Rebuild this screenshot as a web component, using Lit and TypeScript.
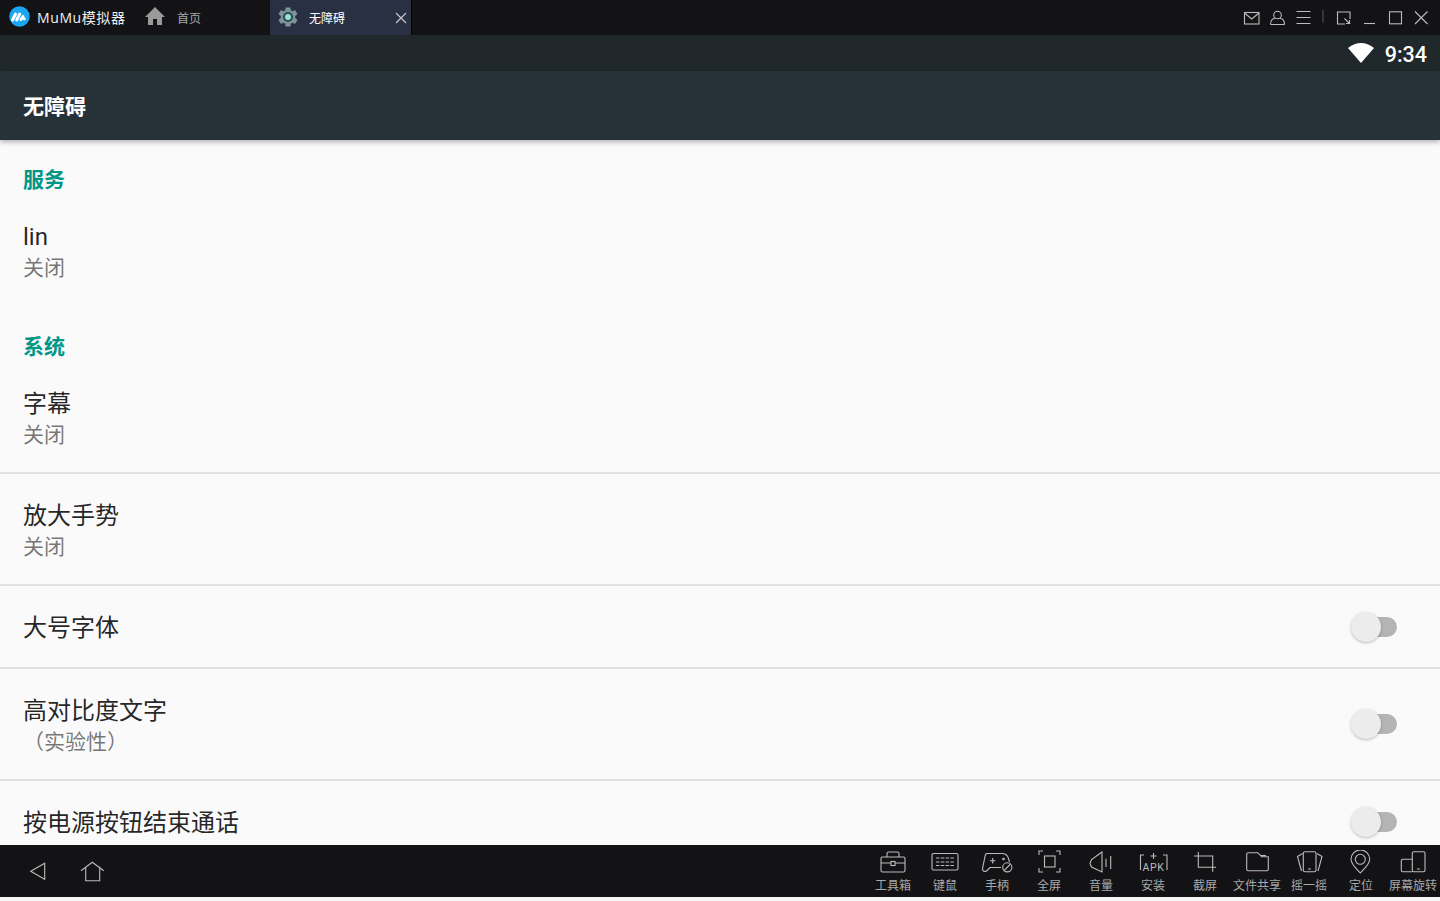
import { LitElement, html, css, svg } from "lit";
import { customElement } from "lit/decorators.js";

const tools = [
  { label: "工具箱", icon: svg`<rect x="4" y="7" width="24" height="15" rx="1.5"/><path d="M10 7V3.500q0-1.500 1.500-1.500h9q1.500 0 1.500 1.500V7M4 13h10M18 13h10"/><rect x="14" y="11.500" width="4" height="4"/>` },
  { label: "键鼠", icon: svg`<rect x="3" y="3.500" width="26" height="16.500" rx="1.500"/><path d="M7 8h18M7 12h18M7 15.500h18" stroke-dasharray="3.500 1.300"/>` },
  { label: "手柄", icon: svg`<path d="M6 3.500h15c3 0 5.500 1.500 6.500 5l1 3.500M20 17.500H9l-3.500 3.500q-1.500 1-3 0Q1 20 1.600 18L4 6.500q.5-3 2-3"/><path d="M9 10.700h5.400M11.700 8v5.400"/><circle cx="22.500" cy="9" r=".8"/><circle cx="26.300" cy="17.300" r="4.600"/><path d="M23 20.600l6.600-6.600"/>` },
  { label: "全屏", icon: svg`<path d="M10 1H6v4M23 1h4v4M6 18v4h4M27 18v4h-4"/><rect x="11.500" y="6" width="10.500" height="11"/>` },
  { label: "音量", icon: svg`<path d="M17 2L6.500 9.500 5 13.500l1.500 3.500L17 22z"/><path d="M21 8.700V17M25.700 6v13"/>` },
  { label: "安装", icon: svg`<path d="M7 5H3.500v15M26 5h4v15M16.500 3v6M13.500 6h6"/><text x="16.500" y="21" text-anchor="middle" class="apk">APK</text>` },
  { label: "截屏", icon: svg`<path d="M9.300 2v15.300H27M5 6h18.700v15.700"/>` },
  { label: "文件共享", icon: svg`<path d="M5.700 4.200q0-1.500 1.500-1.500h9.500l4 4h6.600v12.500q0 1.500-1.500 1.500H7.200q-1.500 0-1.500-1.500z"/><path d="M20 5.500h5"/>` },
  { label: "摇一摇", icon: svg`<rect x="10.300" y="1.700" width="12.700" height="20" rx="1.800"/><path d="M15 19h3M9.500 3.500L4.500 6.500 8.500 21M24 3.500l5 3-4 14.500"/>` },
  { label: "定位", icon: svg`<path d="M15.300 23C11 18 6 14.500 6 9.300a9.300 9.300 0 0 1 18.700 0c0 5.200-5 8.700-9.400 13.700z"/><circle cx="15.300" cy="9.300" r="5"/>` },
  { label: "屏幕旋转", icon: svg`<rect x="15.300" y="1.700" width="12.700" height="20" rx="1.500"/><path d="M20 19h3M15.300 9.300H5.800q-1.500 0-1.500 1.500v9.400q0 1.500 1.500 1.500h9.500"/>` },
];

const gear =
  "M19.14 12.94c.04-.3.06-.61.06-.94 0-.32-.02-.64-.07-.94l2.03-1.58c.18-.14.23-.41.12-.61l-1.92-3.32c-.12-.22-.37-.29-.59-.22l-2.39.96c-.5-.38-1.03-.7-1.62-.94l-.36-2.54c-.04-.24-.24-.41-.48-.41h-3.84c-.24 0-.43.17-.47.41l-.36 2.54c-.59.24-1.13.57-1.62.94l-2.39-.96c-.22-.08-.47 0-.59.22L2.74 8.87c-.12.21-.08.47.12.61l2.03 1.58c-.05.3-.09.63-.09.94s.02.64.07.94l-2.03 1.58c-.18.14-.23.41-.12.61l1.92 3.32c.12.22.37.29.59.22l2.39-.96c.5.38 1.03.7 1.62.94l.36 2.54c.05.24.24.41.48.41h3.84c.24 0 .44-.17.47-.41l.36-2.54c.59-.24 1.13-.56 1.62-.94l2.39.96c.22.08.47 0 .59-.22l1.92-3.32c.12-.22.07-.47-.12-.61l-2.01-1.58z";

@customElement("app-root")
export class AppRoot extends LitElement {
  static styles = css`
    :host {
      display: flex;
      flex-direction: column;
      width: 1440px;
      height: 901px;
      overflow: hidden;
      background: #f6f6f6;
      font-family: Roboto, "Noto Sans CJK SC", sans-serif;
    }
    svg { display: block; flex: none; }
    .line { fill: none; stroke: #bcbcbc; stroke-width: 1.1; }

    .titlebar {
      height: 35px;
      flex: none;
      display: flex;
      align-items: stretch;
      background: #131316;
    }
    .logo { margin: 6px 0 0 9px; }
    .brand {
      margin-left: 7px;
      width: 92px;
      font: 14px/35px "Open Sans", "Noto Sans CJK SC", sans-serif;
      letter-spacing: 0.6px;
      color: #f0f0f0;
      white-space: nowrap;
    }
    .home-icon { margin: 4px 0 0 14px; }
    .home-label {
      margin-left: 10px;
      width: 93px;
      font: 12px/35px "Noto Sans CJK SC", sans-serif;
      color: #a8a8a8;
    }
    .tab {
      width: 141px;
      display: flex;
      align-items: center;
      background: #2a3044;
      border-right: 1px solid #000;
    }
    .tab-gear { margin-left: 6px; margin-top: -1px; }
    .tab-label {
      margin-left: 9px;
      font: 12px/35px "Noto Sans CJK SC", sans-serif;
      color: #fff;
    }
    .tab-close { margin-left: auto; margin-right: 3px; stroke: #c8c8c8; }
    .winctl { margin-left: auto; }

    .status {
      height: 36px;
      flex: none;
      display: flex;
      align-items: center;
      justify-content: flex-end;
      background: #21282c;
    }
    .wifi { margin-right: 11px; margin-top: -1px; }
    .time {
      margin-right: 13px;
      margin-top: 3px;
      font: 500 21.500px/33px Roboto, sans-serif;
      color: #fff;
    }

    .appbar {
      height: 69px;
      flex: none;
      position: relative;
      z-index: 1;
      display: flex;
      align-items: center;
      padding-left: 23px;
      background: #263238;
      box-shadow: 0 2px 5px rgba(0, 0, 0, 0.3);
      font: 700 21px/69px "Noto Sans CJK SC", sans-serif;
      color: #fff;
    }

    .content {
      flex: 1;
      min-height: 0;
      overflow: hidden;
      background: #fafafa;
    }
    .header {
      height: 32px;
      padding: 23px 23px 0;
      font: 700 21px/30px "Noto Sans CJK SC", sans-serif;
      color: #009688;
    }
    .item {
      box-sizing: border-box;
      display: flex;
      align-items: flex-start;
      padding: 26px 43px 0 23px;
      height: 112px;
    }
    .item.single { height: 83px; }
    .item.rule { border-bottom: 2px solid #e0e0e0; }
    .texts { flex: 1; }
    .title {
      font: 24px/32px Roboto, "Noto Sans CJK SC", sans-serif;
      color: rgba(0, 0, 0, 0.87);
    }
    .sub {
      font: 21px/26px "Noto Sans CJK SC", sans-serif;
      color: rgba(0, 0, 0, 0.54);
    }
    .switch {
      position: relative;
      width: 46px;
      height: 20px;
      margin-top: 5px;
    }
    .switch.low { margin-top: 19px; }
    .track {
      position: absolute;
      right: 0;
      top: 0;
      width: 36px;
      height: 20px;
      border-radius: 10px;
      background: #b4b4b4;
    }
    .thumb {
      position: absolute;
      left: 0;
      top: -5px;
      width: 30px;
      height: 30px;
      border-radius: 50%;
      background: #ececec;
      box-shadow: 0 1px 3px rgba(0, 0, 0, 0.25);
    }

    .bottombar {
      height: 52px;
      flex: none;
      display: flex;
      align-items: flex-start;
      background: #131316;
    }
    .nav { margin: 9px 0 0 24px; }
    .tools { margin-left: auto; margin-right: 1px; display: flex; }
    .tool {
      width: 52px;
      height: 52px;
      display: flex;
      flex-direction: column;
      align-items: center;
      padding-top: 5px;
      box-sizing: border-box;
    }
    .tool-label {
      font: 12px/18px "Noto Sans CJK SC", sans-serif;
      color: #a8a8a8;
      white-space: nowrap;
      margin-top: 2px;
    }
    .apk {
      font: 10.500px Roboto, sans-serif;
      letter-spacing: 0.6px;
      fill: #bcbcbc;
      stroke: none;
    }
    .footer { height: 4px; flex: none; background: #f6f6f6; }
  `;

  private toggle(low = false) {
    return html`<div class="switch ${low ? "low" : ""}"><div class="track"></div><div class="thumb"></div></div>`;
  }

  render() {
    return html`
      <div class="titlebar">
        <svg class="logo" width="21" height="21" viewBox="0 0 21 21">
          <circle cx="10.500" cy="10.500" r="10.200" fill="#1ba6f2"/>
          <path d="M3.500 14L6.500 8M7.700 14L10.700 8M12 13.500L14 10.500" fill="none" stroke="#fff" stroke-width="3" stroke-linecap="round"/>
          <circle cx="15.300" cy="12.800" r="1.500" fill="#fff"/>
        </svg>
        <div class="brand">MuMu模拟器</div>
        <svg class="home-icon" width="24" height="24" viewBox="0 0 24 24"><path d="M10 21v-6h4v6h5v-8h3L12 3 2 13h3v8z" fill="#9a9a9a"/></svg>
        <div class="home-label">首页</div>
        <div class="tab">
          <svg class="tab-gear" width="24" height="24" viewBox="0 0 24 24">
            <path d="${gear}" fill="#7b959c"/>
            <circle cx="12" cy="12" r="5" fill="#33454c"/>
            <circle cx="12" cy="12" r="3" fill="#8de6cf"/>
          </svg>
          <div class="tab-label">无障碍</div>
          <svg class="tab-close" width="14" height="14" viewBox="0 0 14 14"><path d="M2 2l10 10M12 2L2 12" fill="none" stroke-width="1.200"/></svg>
        </div>
        <svg class="winctl line" width="200" height="35" viewBox="0 0 200 35">
          <rect x="4.500" y="12.500" width="14.500" height="11.500"/><path d="M4.500 13l7.200 6 7.300-6"/>
          <circle cx="37.500" cy="15" r="3.800"/><path d="M30.500 24.500q0-5.500 4.500-6.200M44.500 24.500q0-5.500-4.500-6.200M30.500 24.500h14"/>
          <path d="M56.500 11.500h14M56.500 17.500h14M56.500 23.500h14"/>
          <path d="M83 10v12.500" stroke="#555"/>
          <path d="M105 24h-7.500V12H110v7M110 24v-.5M104.500 18.500l5 5M106 23.500h3.500V20"/>
          <path d="M124 23.500h11"/>
          <rect x="149.500" y="11.800" width="12" height="12"/>
          <path d="M175 11.500l12.500 12.500M187.500 11.500L175 24"/>
        </svg>
      </div>

      <div class="status">
        <svg class="wifi" width="26" height="20" viewBox="0 0 26 20"><path d="M0 5Q13-5 26 5L13 20z" fill="#fff"/></svg>
        <div class="time">9:34</div>
      </div>

      <div class="appbar">无障碍</div>

      <div class="content">
        <div class="header">服务</div>
        <div class="item">
          <div class="texts"><div class="title">lin</div><div class="sub">关闭</div></div>
        </div>
        <div class="header">系统</div>
        <div class="item rule">
          <div class="texts"><div class="title">字幕</div><div class="sub">关闭</div></div>
        </div>
        <div class="item rule">
          <div class="texts"><div class="title">放大手势</div><div class="sub">关闭</div></div>
        </div>
        <div class="item single rule">
          <div class="texts"><div class="title">大号字体</div></div>
          ${this.toggle()}
        </div>
        <div class="item rule">
          <div class="texts"><div class="title">高对比度文字</div><div class="sub">（实验性）</div></div>
          ${this.toggle(true)}
        </div>
        <div class="item single">
          <div class="texts"><div class="title">按电源按钮结束通话</div></div>
          ${this.toggle()}
        </div>
      </div>

      <div class="bottombar">
        <svg class="nav line" width="90" height="36" viewBox="0 0 90 36">
          <path d="M6.700 17.300l14-8v16z"/>
          <path d="M57 16.700l11.300-8.400 11.400 8.400M61.700 12.700v14h14v-14"/>
        </svg>
        <div class="tools">
          ${tools.map(
            (t) => html`<div class="tool">
              <svg class="line" width="32" height="24" viewBox="0 0 32 24">${t.icon}</svg>
              <div class="tool-label">${t.label}</div>
            </div>`
          )}
        </div>
      </div>
      <div class="footer"></div>
    `;
  }
}
